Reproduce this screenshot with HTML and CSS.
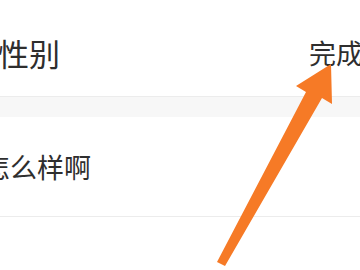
FILE: index.html
```html
<!DOCTYPE html>
<html lang="zh-CN">
<head>
  <meta charset="UTF-8" />
  <meta name="viewport" content="width=device-width, initial-scale=1.0" />
  <title>性别</title>
  <link rel="stylesheet" href="styles.css">
</head>
<body>
  <div class="page">
    <div class="nav-bar">
      <h1 class="title">性别</h1>
      <span class="done-btn">完成</span>
    </div>
    <div class="divider-band"></div>
    <div class="list">
      <div class="list-item">怎么样啊</div>
      <div class="list-item empty"></div>
    </div>

    <!-- 指向完成按钮的箭头 -->
    <svg class="pointer-arrow" width="360" height="270" viewBox="0 0 360 270">
      <polygon points="331,64 332,104 322,98 225,266 217,262 306,92 296,86" fill="#f67a26" />
    </svg>
  </div>
</body>
</html>
```

FILE: styles.css
```css
:root {
  --text: #2e2e2e;
  --line: #ececec;
  --band: #f7f7f7;
}

body {
  margin: 0;
  font-family: "Noto Sans CJK SC", "Noto Sans", sans-serif;
  background: #fff;
  color: var(--text);
  overflow: hidden;
}

.page {
  position: relative;
  width: 360px;
  height: 270px;
  overflow: hidden;
}

.nav-bar {
  display: flex;
  align-items: center;
  justify-content: space-between;
  height: 88px;
  padding-top: 8px;
  border-bottom: 1px solid var(--line);
  box-sizing: content-box;
}

.title {
  margin: 0 0 0 -2px;
  font-size: 31px;
  font-weight: normal;
  white-space: nowrap;
}

.done-btn {
  flex-shrink: 0;
  margin-right: -3px;
  font-size: 27px;
  white-space: nowrap;
}

.divider-band {
  height: 20px;
  background: var(--band);
}

.list-item {
  display: flex;
  align-items: center;
  height: 99px;
  margin-left: -17px;
  font-size: 27px;
  white-space: nowrap;
  border-bottom: 1px solid var(--line);
}

.list-item.empty {
  border-bottom: none;
}

.pointer-arrow {
  position: absolute;
  left: 0;
  top: 0;
}
```
